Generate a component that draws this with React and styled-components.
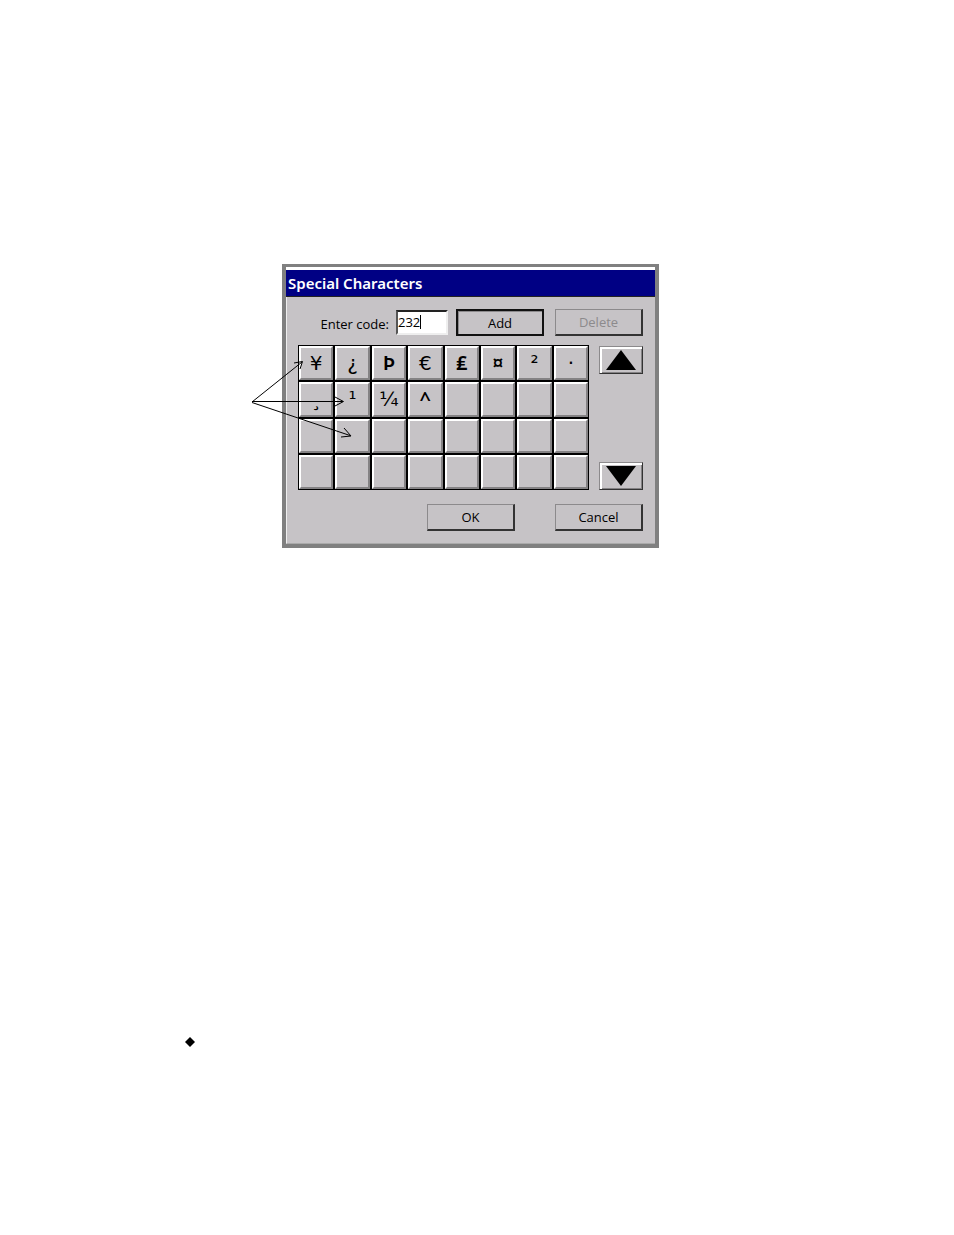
import React, { useState } from "react";
import styled, { createGlobalStyle } from "styled-components";

const GlobalStyle = createGlobalStyle`
  * { box-sizing: border-box; }
  body { margin: 0; background: #fff; }
`;

const face = "#c6c3c6";
const sans = `"Open Sans", "Noto Sans", sans-serif`;

const Page = styled.main`
  min-height: 100vh;
  padding: 264px 100px 80px 185px;
  font-family: ${sans};
  color: #000;
`;

const Figure = styled.figure`
  position: relative;
  width: 100%;
  max-width: 377px;
  margin: 0 0 0 97px;
`;

const Dialog = styled.section`
  border: 4px solid #808080;
  border-top-width: 3px;
  background: ${face};
`;

const Title = styled.h1`
  margin: 0;
  height: 30px;
  padding: 0 2px;
  border-top: 3px solid #fff;
  border-bottom: 1px solid #222;
  background: #000084;
  color: #fff;
  font-family: "Noto Sans", sans-serif;
  font-size: 15px;
  line-height: 26px;
  font-weight: 600;
`;

const Body = styled.form`
  display: flex;
  flex-direction: column;
  padding: 12px 12px 12px 11px;
  border-left: 1px solid #eee;
  border-bottom: 1px solid #aaa;
`;

const EntryRow = styled.div`
  display: flex;
  justify-content: flex-end;
  align-items: center;
`;

const Label = styled.label`
  height: 27px;
  padding-top: 3px;
  font-size: 13px;
  line-height: 24px;
  margin-right: 7px;
`;

const CodeField = styled.span`
  position: relative;
  display: flex;
  margin-right: 8px;
`;

const CodeInput = styled.input`
  width: 52px;
  height: 25px;
  padding: 0 0 2px;
  border: 2px solid;
  border-color: #222 #eee #eee #555;
  border-radius: 0;
  outline: none;
  background: #fff;
  caret-color: transparent;
  font-family: ${sans};
  font-size: 13px;
  line-height: 18px;
`;

const Caret = styled.span`
  position: absolute;
  top: 5px;
  left: 24px;
  width: 1px;
  height: 14px;
  background: #000;
`;

const PushButton = styled.button`
  width: 88px;
  height: 27px;
  padding: 0;
  border: ${(p) => (p.$primary ? "2px" : "1px")} solid;
  border-color: ${(p) => (p.$primary ? "#111" : "#8c8a8c #333 #333 #8c8a8c")};
  border-right-width: 2px;
  border-bottom-width: 2px;
  border-radius: 0;
  background: ${face};
  box-shadow: ${(p) => (p.$primary ? "inset 1px 1px #8c8a8c" : "none")};
  color: #000;
  font-family: ${sans};
  font-size: 13px;
  line-height: 22px;

  &:disabled { color: #8c8a8c; }
`;

const EntryButtons = styled.div`
  display: flex;
  gap: 11px;
`;

const PickerRow = styled.div`
  display: flex;
  gap: 10px;
  margin-top: 9px;
`;

const CharacterGrid = styled.div`
  flex: 1;
  display: grid;
  grid-template-columns: repeat(8, 1fr);
  grid-template-rows: repeat(4, 1fr);
  gap: 2px;
  height: 145px;
  padding: 1px;
  background: #000;
`;

const CharacterKey = styled.button`
  min-width: 0;
  padding: 0;
  border: 2px solid;
  border-color: #fff #848284 #848284 #fff;
  border-radius: 0;
  background: ${face};
  color: #000;
  font-family: ${(p) => (p.$strong ? `"Noto Sans"` : `"DejaVu Sans"`)}, sans-serif;
  font-size: 20px;
  line-height: 28px;
  font-weight: ${(p) => (p.$strong ? 600 : 400)};
`;

const ScrollColumn = styled.div`
  display: flex;
  flex-direction: column;
  justify-content: space-between;
  padding-top: 1px;
`;

const ScrollButton = styled.button`
  display: flex;
  align-items: center;
  justify-content: center;
  width: 44px;
  height: 28px;
  padding: 0;
  border: 1px solid;
  border-color: #8c8a8c #333 #333 #8c8a8c;
  border-radius: 0;
  background: ${face};
  box-shadow: inset 2px 2px #fff, inset -1px -1px #848284;
`;

const Actions = styled.div`
  display: flex;
  justify-content: flex-end;
  gap: 40px;
  margin-top: 14px;
`;

const Callouts = styled.svg`
  position: absolute;
  top: 90px;
  left: -34px;
  pointer-events: none;
`;

const Notes = styled.ul`
  list-style: none;
  margin: 489px 0 0;
  padding: 0;
`;

const Note = styled.li`
  display: flex;
`;

const characters = ["¥", "¿", "Þ", "€", "₤", "¤", "²", "·", "¸", "¹", "¼", "^"];
const strongCharacters = ["Þ", "₤", "¤", "^"];
const keys = Array.from({ length: 32 }, (_, i) => characters[i] || "");

export default function App() {
  const [code, setCode] = useState("232");
  return (
    <Page>
      <GlobalStyle />
      <Figure>
        <Dialog aria-labelledby="dialog-title">
          <Title id="dialog-title">Special Characters</Title>
          <Body onSubmit={(e) => e.preventDefault()}>
            <EntryRow>
              <Label htmlFor="code">Enter code:</Label>
              <CodeField>
                <CodeInput id="code" value={code} onChange={(e) => setCode(e.target.value)} />
                <Caret />
              </CodeField>
              <EntryButtons>
                <PushButton $primary type="submit">Add</PushButton>
                <PushButton type="button" disabled>Delete</PushButton>
              </EntryButtons>
            </EntryRow>
            <PickerRow>
              <CharacterGrid>
                {keys.map((character, i) => (
                  <CharacterKey
                    key={i}
                    type="button"
                    $strong={strongCharacters.includes(character)}
                    aria-label={character || "Empty"}
                  >
                    {character}
                  </CharacterKey>
                ))}
              </CharacterGrid>
              <ScrollColumn>
                <ScrollButton type="button" aria-label="Scroll up">
                  <svg width="30" height="20" viewBox="0 0 30 20"><path d="M15 0 30 20H0Z" /></svg>
                </ScrollButton>
                <ScrollButton type="button" aria-label="Scroll down">
                  <svg width="30" height="20" viewBox="0 0 30 20"><path d="M0 0H30L15 20Z" /></svg>
                </ScrollButton>
              </ScrollColumn>
            </PickerRow>
            <Actions>
              <PushButton type="button">OK</PushButton>
              <PushButton type="button">Cancel</PushButton>
            </Actions>
          </Body>
        </Dialog>
        <Callouts width="110" height="90" viewBox="248 354 110 90" fill="none" stroke="#000">
          <path d="M252 402 302 362M294 363 302.500 361.500 300 369" />
          <path d="M252 401.500H343M335 397 343.500 401.500 335 406" />
          <path d="M252 402.500 350 435.500M344 428 351 436 341 437" />
        </Callouts>
      </Figure>
      <Notes>
        <Note>
          <svg width="10" height="10" viewBox="0 0 10 10" aria-hidden="true"><path d="M5 0 10 5 5 10 0 5Z" /></svg>
        </Note>
      </Notes>
    </Page>
  );
}
